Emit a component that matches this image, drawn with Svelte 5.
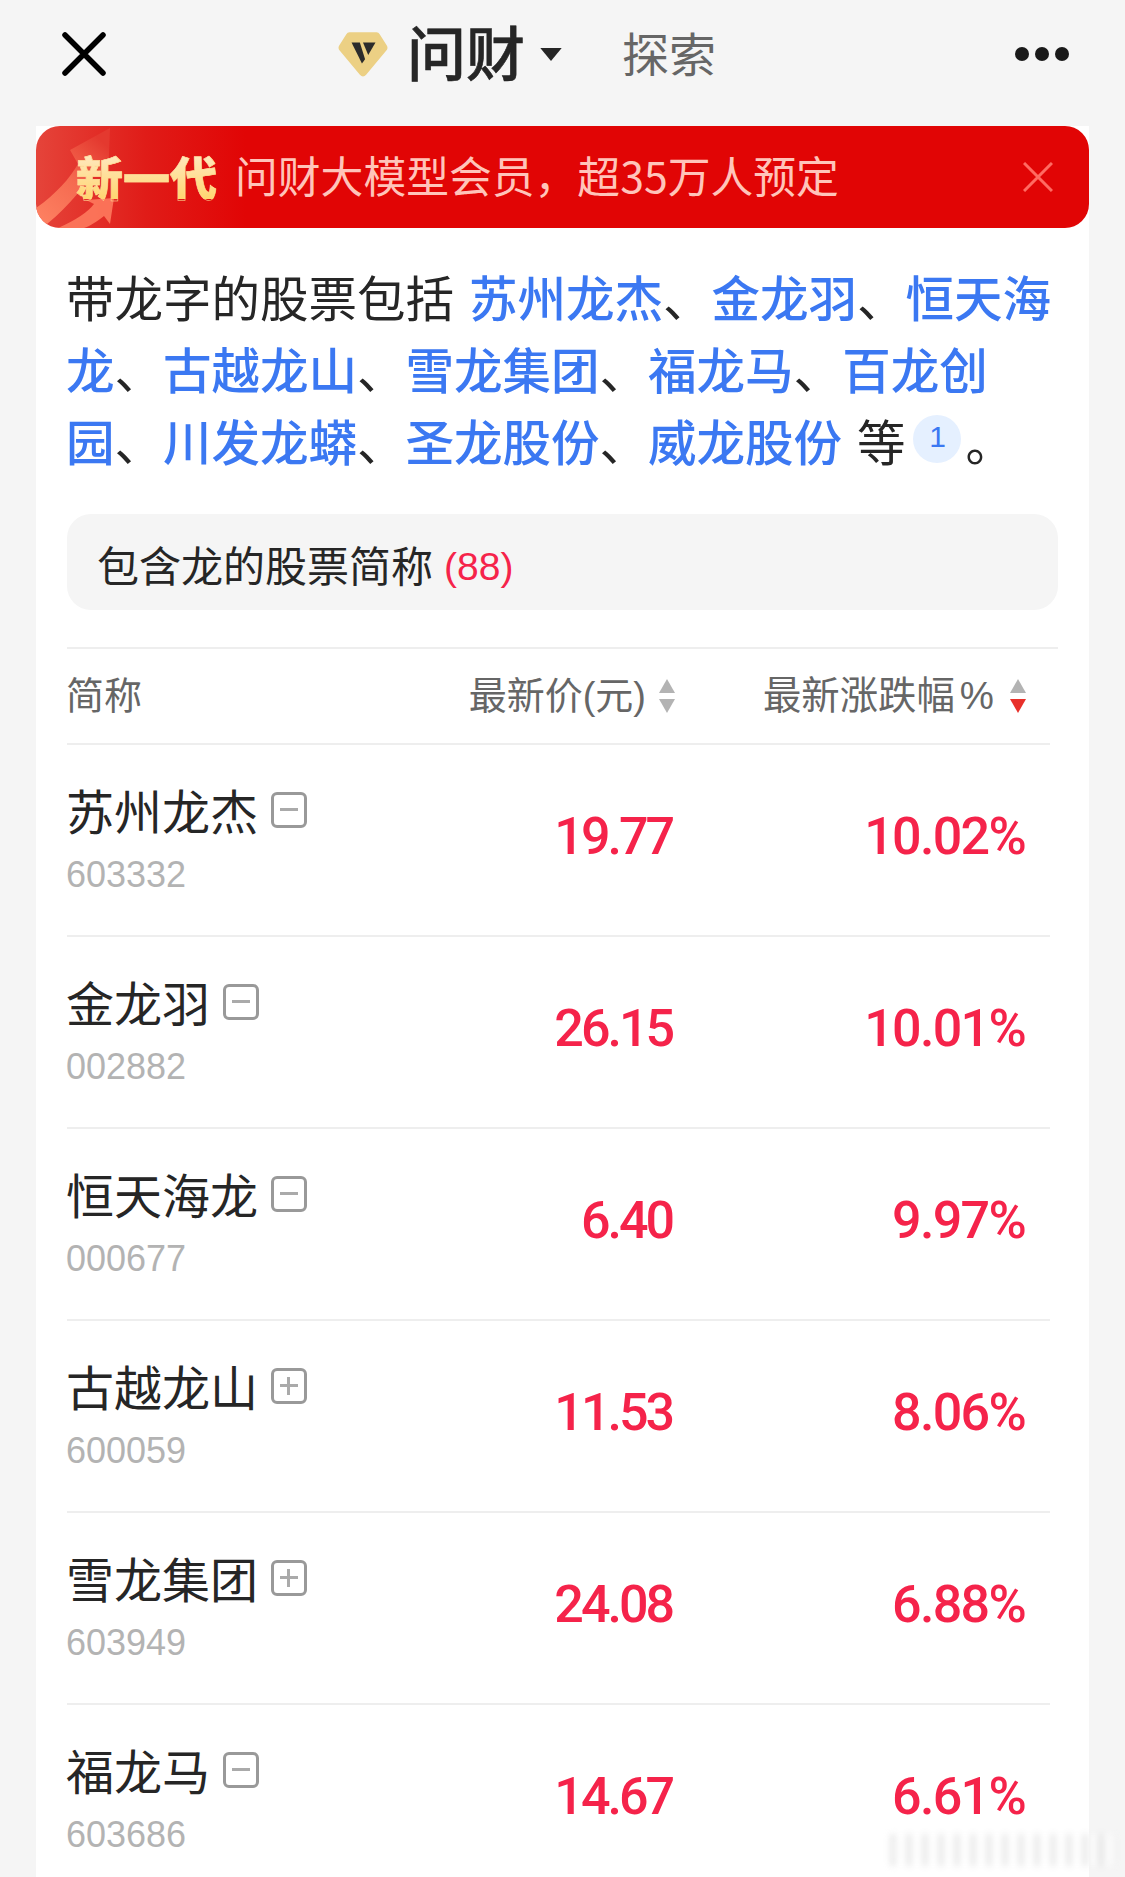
<script>
	const stocks = [
		{ name: '苏州龙杰', code: '603332', price: '19.77', pct: '10.02%', open: false },
		{ name: '金龙羽', code: '002882', price: '26.15', pct: '10.01%', open: false },
		{ name: '恒天海龙', code: '000677', price: '6.40', pct: '9.97%', open: false },
		{ name: '古越龙山', code: '600059', price: '11.53', pct: '8.06%', open: true },
		{ name: '雪龙集团', code: '603949', price: '24.08', pct: '6.88%', open: true },
		{ name: '福龙马', code: '603686', price: '14.67', pct: '6.61%', open: false }
	];
	const links = [
		['苏州龙杰', '、'], ['金龙羽', '、'], ['恒天海龙', '、'], ['古越龙山', '、'], ['雪龙集团', '、'],
		['福龙马', '、'], ['百龙创园', '、'], ['川发龙蟒', '、'], ['圣龙股份', '、'], ['威龙股份', '']
	];
</script>

<div class="page">
	<header class="topbar">
		<svg class="close" viewBox="0 0 44 44" width="44" height="44">
			<path d="M3 3 L41 41 M41 3 L3 41" stroke="#000" stroke-width="5.5" stroke-linecap="round" fill="none" />
		</svg>
		<svg class="logo" viewBox="0 0 48 44" width="50" height="46">
			<path d="M11 1 H37 Q39 1 40 3 L47 14 Q48 16 47 18 L27 42 Q24 45 21 42 L1 18 Q0 16 1 14 L8 3 Q9 1 11 1 Z" fill="#ecd084" />
			<path d="M13 11 H21 L26 27 L23 31 Z" fill="#2b2b2b" />
			<path d="M24 11 H36 L29 23 Z" fill="#2b2b2b" />
		</svg>
		<span class="brand">问财</span>
		<svg class="caret" viewBox="0 0 22 14" width="24" height="15"><path d="M1 1 H21 L11 13 Z" fill="#262626" /></svg>
		<span class="explore">探索</span>
		<span class="dots"><i></i><i></i><i></i></span>
	</header>

	<main class="card">
		<div class="banner">
			<svg class="arrow" viewBox="0 0 100 102" width="100" height="102">
				<defs>
					<linearGradient id="arrowFill" x1="0" y1="1" x2="0.7" y2="0">
						<stop offset="0" stop-color="#ff8464" />
						<stop offset="0.55" stop-color="#f56a50" />
						<stop offset="1" stop-color="#e4392f" />
					</linearGradient>
				</defs>
				<path d="M0 82 C20 68 34 52 42 38 L34 24 L74 2 L72 52 L60 42 C44 68 24 88 6 102 L0 102 Z" fill="url(#arrowFill)" />
				<path d="M22 102 C40 94 52 86 58 78 L50 74 L78 72 L74 98 L68 90 C60 96 54 100 48 102 Z" fill="#ff7e60" opacity="0.85" />
			</svg>
			<span class="new">新一代</span>
			<span class="promo">问财大模型会员，超35万人预定</span>
			<svg class="banner-close" viewBox="0 0 30 30" width="30" height="30">
				<path d="M1 1 L29 29 M29 1 L1 29" stroke="#ff6b62" stroke-width="3" fill="none" />
			</svg>
		</div>

		<div class="body">
			<p class="answer">带龙字的股票包括 {#each links as [label, sep]}<span class="link">{label}</span>{sep}{/each} 等<span class="ref">1</span>。</p>

			<div class="chip">包含龙的股票简称 <span class="count">(88)</span></div>

			<div class="thead">
				<span class="th first">简称</span>
				<span class="th right price">最新价(元)
					<span class="sort"><b class="up"></b><b class="down"></b></span>
				</span>
				<span class="th right pct"><span>最新涨跌幅<span class="percent">%</span></span>
					<span class="sort"><b class="up"></b><b class="down active"></b></span>
				</span>
			</div>

			{#each stocks as s}
				<div class="row">
					<div class="stock">
						<div class="name">{s.name}<span class="tag" class:open={s.open}></span></div>
						<div class="code">{s.code}</div>
					</div>
					<div class="num price-val">{s.price}</div>
					<div class="num pct-val">{s.pct}</div>
				</div>
			{/each}
		</div>
	</main>

	<div class="watermark"></div>
</div>

<style>
	:global(body) {
		margin: 0;
		background: #f5f5f5;
	}

	.page {
		position: relative;
		height: 1877px;
		overflow: hidden;
		background: #f5f5f5;
		font-family: 'Noto Sans CJK SC', 'Liberation Sans', sans-serif;
		color: #262626;
	}

	.topbar {
		display: flex;
		align-items: center;
		height: 108px;
		padding: 0 56px 0 62px;
	}

	.close {
		margin-right: 232px;
	}

	.logo {
		margin-right: 19px;
	}

	.brand {
		margin-bottom: 7px;
		font-size: 59px;
		font-weight: 500;
		line-height: 1;
		color: #262626;
		-webkit-text-stroke: 0.6px #262626;
	}

	.caret {
		margin-left: 14px;
		margin-right: 59px;
	}

	.explore {
		margin-bottom: 5px;
		font-size: 47px;
		line-height: 1;
		color: #666;
	}

	.dots {
		display: flex;
		gap: 6px;
		margin-left: auto;
	}

	.dots i {
		width: 14px;
		height: 14px;
		border-radius: 50%;
		background: #1a1a1a;
	}

	.card {
		margin: 18px 36px 0;
		background: #fff;
		height: 1800px;
	}

	.banner {
		position: relative;
		display: flex;
		align-items: center;
		height: 102px;
		padding: 0 36px 0 40px;
		border-radius: 24px;
		overflow: hidden;
		background: linear-gradient(90deg, #e5443a 0, #e01c18 110px, #e10505 210px);
	}

	.arrow {
		position: absolute;
		left: 0;
		top: 0;
	}

	.new {
		position: relative;
		margin-bottom: 3px;
		font-size: 47px;
		font-weight: 900;
		line-height: 1;
		background: linear-gradient(180deg, #ffe9c4, #ffd670);
		-webkit-background-clip: text;
		background-clip: text;
		color: transparent;
		-webkit-text-stroke: 0.5px #ffdf9a;
	}

	.promo {
		position: relative;
		margin-bottom: 5px;
		margin-left: 18px;
		font-size: 42.8px;
		line-height: 1;
		color: #ffc4ba;
	}

	.banner-close {
		margin-left: auto;
	}

	.body {
		padding: 0 31px;
	}

	.answer {
		margin: 32px 0 0 -1px;
		font-size: 48.5px;
		line-height: 72px;
		word-spacing: 4px;
		color: #262626;
	}

	.link {
		color: #3b78f2;
		font-weight: 500;
	}

	.ref {
		display: inline-block;
		width: 48px;
		height: 48px;
		margin: 0 4px 0 8px;
		border-radius: 50%;
		background: #e5f0ff;
		color: #3b78f2;
		font-family: 'Liberation Sans', sans-serif;
		font-size: 30px;
		line-height: 44px;
		text-align: center;
		vertical-align: 14px;
	}

	.chip {
		display: flex;
		align-items: baseline;
		gap: 11px;
		height: 96px;
		margin-top: 38px;
		padding: 0 30px;
		border-radius: 24px;
		background: #f5f5f5;
		font-size: 42px;
		line-height: 100px;
		color: #262626;
	}

	.count {
		position: relative;
		top: -2px;
		font-family: 'Liberation Sans', sans-serif;
		font-size: 39px;
		color: #f5234a;
	}

	.thead,
	.row {
		display: grid;
		grid-template-columns: 1fr 326px 352px;
		align-items: center;
		padding-right: 32px;
	}

	.thead {
		height: 94px;
		margin-top: 37px;
		border-top: 2px solid #eee;
	}

	.th {
		font-family: 'Liberation Sans', 'Noto Sans CJK SC', sans-serif;
		font-size: 38px;
		line-height: 1;
		color: #666;
	}

	.th.first {
		margin-left: -1px;
	}

	.th.right {
		display: flex;
		align-items: center;
		justify-content: flex-end;
		gap: 13px;
	}

	.th.price .sort {
		margin-right: -1px;
	}

	.th.pct {
		gap: 16px;
		font-size: 38.4px;
	}

	.percent {
		margin-left: 5px;
	}

	.sort {
		display: flex;
		flex-direction: column;
		gap: 6px;
	}

	.sort b {
		width: 0;
		height: 0;
		border-left: 8px solid transparent;
		border-right: 8px solid transparent;
	}

	.sort .up {
		border-bottom: 14px solid #b3b3b3;
	}

	.sort .down {
		border-top: 14px solid #b3b3b3;
	}

	.sort .down.active {
		border-top-color: #e8302a;
	}

	.row {
		height: 190px;
		border-top: 2px solid #eee;
		margin-right: 8px;
		padding-right: 24px;
	}

	.stock {
		margin-left: -1px;
		padding-bottom: 6px;
	}

	.name {
		display: flex;
		align-items: center;
		font-size: 48px;
		line-height: 64px;
		color: #262626;
	}

	.tag {
		position: relative;
		top: 1px;
		width: 36px;
		height: 36px;
		margin-left: 13px;
		box-sizing: border-box;
		border: 3px solid #999;
		border-radius: 6px;
	}

	.tag::before {
		content: '';
		position: absolute;
		left: 6px;
		right: 6px;
		top: 13px;
		height: 3px;
		background: #aaa;
	}

	.tag.open::after {
		content: '';
		position: absolute;
		top: 6px;
		bottom: 6px;
		left: 13px;
		width: 3px;
		background: #aaa;
	}

	.code {
		margin-top: 12px;
		font-family: 'Liberation Sans', sans-serif;
		font-size: 36px;
		line-height: 44px;
		color: #b3b3b3;
	}

	.num {
		padding-bottom: 7px;
		font-family: Roboto, 'Liberation Sans', sans-serif;
		font-size: 52px;
		font-weight: 500;
		line-height: 1;
		text-align: right;
		color: #f5234a;
	}

	.price-val {
		margin-right: 2px;
		letter-spacing: -3px;
	}

	.pct-val {
		margin-right: 1px;
		letter-spacing: -1.7px;
	}

	.watermark {
		position: absolute;
		left: 890px;
		top: 1834px;
		width: 225px;
		height: 32px;
		background: repeating-linear-gradient(90deg, #dcdcdc 0 6px, #fff 6px 16px);
		filter: blur(3px);
		opacity: 0.6;
	}
</style>
